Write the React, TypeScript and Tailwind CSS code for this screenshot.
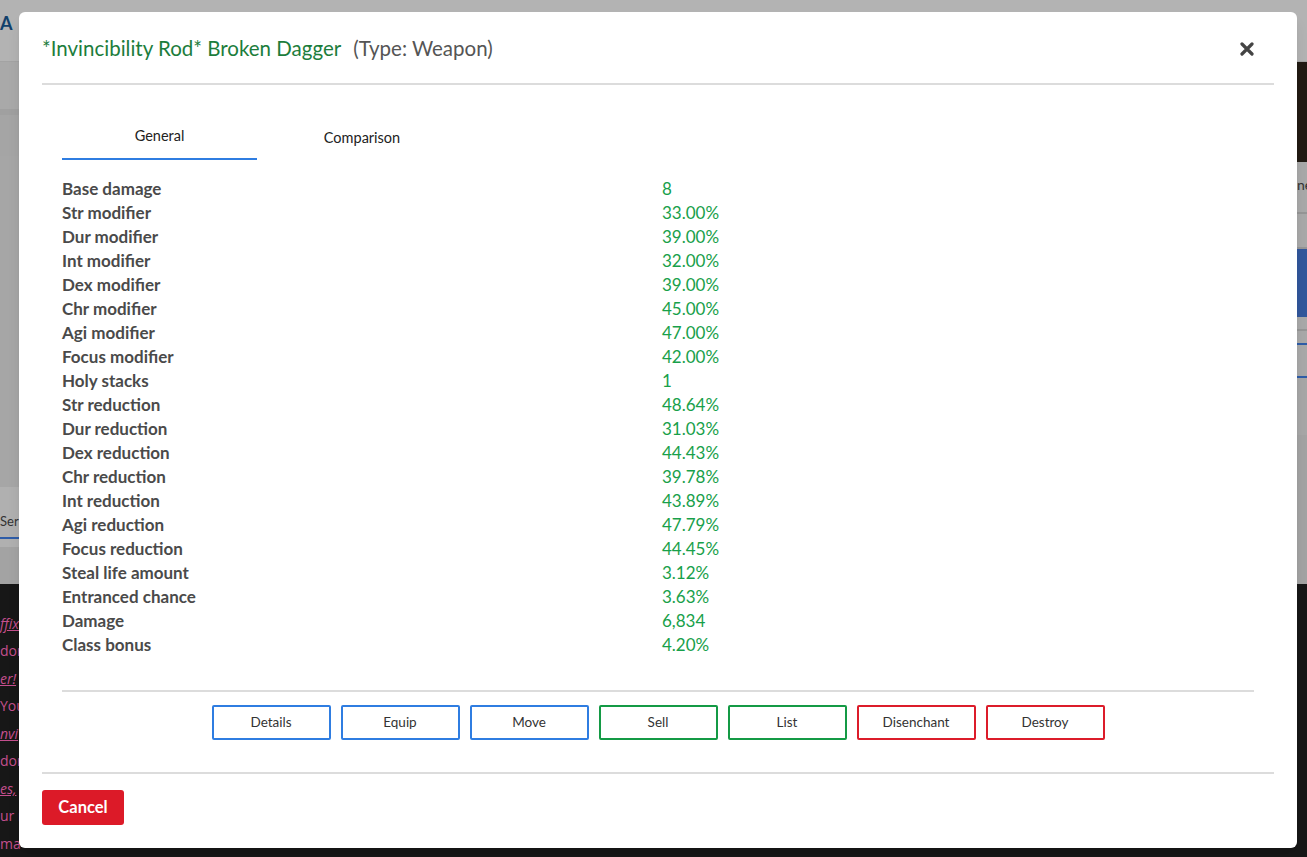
import React, { useState } from 'react';

const stats: [string, string][] = [
  ['Base damage', '8'],
  ['Str modifier', '33.00%'],
  ['Dur modifier', '39.00%'],
  ['Int modifier', '32.00%'],
  ['Dex modifier', '39.00%'],
  ['Chr modifier', '45.00%'],
  ['Agi modifier', '47.00%'],
  ['Focus modifier', '42.00%'],
  ['Holy stacks', '1'],
  ['Str reduction', '48.64%'],
  ['Dur reduction', '31.03%'],
  ['Dex reduction', '44.43%'],
  ['Chr reduction', '39.78%'],
  ['Int reduction', '43.89%'],
  ['Agi reduction', '47.79%'],
  ['Focus reduction', '44.45%'],
  ['Steal life amount', '3.12%'],
  ['Entranced chance', '3.63%'],
  ['Damage', '6,834'],
  ['Class bonus', '4.20%'],
];

const actions = [
  { label: 'Details', border: 'border-[#2f7de1]' },
  { label: 'Equip', border: 'border-[#2f7de1]' },
  { label: 'Move', border: 'border-[#2f7de1]' },
  { label: 'Sell', border: 'border-[#149a45]' },
  { label: 'List', border: 'border-[#149a45]' },
  { label: 'Disenchant', border: 'border-[#dc1c2a]' },
  { label: 'Destroy', border: 'border-[#dc1c2a]' },
];

const chatLines = [
  { text: 'ffix', link: true },
  { text: 'dor', link: false },
  { text: 'er!', link: true },
  { text: 'You', link: false },
  { text: 'nvi', link: true },
  { text: 'dor', link: false },
  { text: 'es,', link: true },
  { text: 'ur m', link: false },
  { text: 'ma', link: false },
];

const Backdrop: React.FC = () => (
  <div className="flex h-[857px] w-full flex-col bg-[#a9a9a9]">
    <div className="flex h-[63px] items-start border-b border-[#a3a3a3] bg-[#b3b3b3]">
      <div className="flex flex-1 pt-[10px] text-[18px] font-bold text-[#11406b]">A</div>
    </div>
    <div className="flex h-[527px]">
      <div className="flex w-[19px] flex-col">
        <div className="h-[47px] bg-[#a9a9a9]" />
        <div className="h-[47px] border-t-[6px] border-[#a0a0a0] bg-[#a5a5a5]" />
        <div className="h-[331px] bg-[#a6a6a6]" />
        <div className="flex h-[60px] flex-col bg-[#b0b0b0]">
          <div className="mt-[25px] text-[13px] text-[#333]">Ser</div>
          <div className="mt-[5px] h-[2px] w-full bg-[#2f5da8]" />
        </div>
        <div className="flex-1 bg-[#a3a3a3]" />
      </div>
      <div className="flex-1" />
      <div className="flex w-[10px] flex-col">
        <div className="h-[100px] bg-[#221b14]" />
        <div className="h-[30px] bg-[#a9a9a9] pt-[16px] text-[14px] leading-none text-[#333]">ne</div>
        <div className="h-[22px] border-b-2 border-[#969696] bg-[#a9a9a9]" />
        <div className="h-[35px] border-b-2 border-[#969696] bg-[#a9a9a9]" />
        <div className="h-[68px] bg-[#32579c]" />
        <div className="h-[14px] border-b-2 border-[#969696] bg-[#a9a9a9]" />
        <div className="h-[14px] border-b-2 border-[#2f5da8] bg-[#a9a9a9]" />
        <div className="h-[33px] border-b-2 border-[#2f5da8] bg-[#a9a9a9]" />
        <div className="h-[57px] bg-[#a7a7a7]" />
        <div className="flex-1 bg-[#a3a3a3]" />
      </div>
    </div>
    <div className="flex flex-1 flex-col bg-[#171717] pt-[26px] text-[14px] leading-[27.5px] text-[#c44f8e]" style={{ fontFamily: '"Open Sans", sans-serif' }}>
      {chatLines.map((l, i) => (
        <div key={i} className={`whitespace-nowrap ${l.link ? 'italic underline' : ''}`}>{l.text}</div>
      ))}
    </div>
  </div>
);

const App: React.FC = () => {
  const [tab, setTab] = useState<'general' | 'comparison'>('general');

  return (
    <div className="relative h-[857px] w-[1307px] overflow-hidden" style={{ fontFamily: 'Lato, "Open Sans", sans-serif' }}>
      <Backdrop />
      <div className="absolute left-[19px] top-[12px] flex h-[836px] w-[1278px] flex-col rounded-[6px] bg-white px-[23px] shadow-lg">
        <div className="flex h-[73px] items-center justify-between border-b-2 border-[#dcdcdc] pt-[2px]">
          <div className="flex items-baseline text-[20.5px]">
            <span className="text-[#1c7d3c]">*Invincibility Rod* Broken Dagger</span>
            <span className="ml-[12px] text-[#555]">(Type: Weapon)</span>
          </div>
          <button className="mr-[20px] text-[#444]">
            <svg width="14" height="14" viewBox="0 0 14 14">
              <path d="M2 2 L12 12 M12 2 L2 12" stroke="currentColor" strokeWidth="3.2" strokeLinecap="round" />
            </svg>
          </button>
        </div>

        <div className="flex flex-col px-[20px]">
          <div className="mt-[25px] flex">
            <button
              onClick={() => setTab('general')}
              className={`h-[50px] w-[195px] pt-[4px] text-[14.5px] text-[#222] ${tab === 'general' ? 'border-b-2 border-[#2f7de1]' : ''}`}
            >
              General
            </button>
            <button
              onClick={() => setTab('comparison')}
              className={`h-[50px] w-[210px] pt-[5px] text-[14.5px] text-[#222] ${tab === 'comparison' ? 'border-b-2 border-[#2f7de1]' : ''}`}
            >
              Comparison
            </button>
          </div>

          <div className="mt-[17px] flex flex-col">
            {stats.map(([k, v]) => (
              <div key={k} className="flex h-[24px] items-center text-[17px]">
                <div className="w-[600px] font-bold text-[#4a4a4a]">{k}</div>
                <div className="text-[#18a04a]">{v}</div>
              </div>
            ))}
          </div>

          <div className="mt-[33px] h-[2px] bg-[#dcdcdc]" />

          <div className="mt-[13px] flex justify-center gap-[10px]">
            {actions.map((a) => (
              <button key={a.label} className={`h-[35px] w-[119px] rounded-[2px] border-2 text-[13.5px] text-[#333] ${a.border}`}>
                {a.label}
              </button>
            ))}
          </div>
        </div>

        <div className="mt-[32px] h-[2px] bg-[#dcdcdc]" />
        <div className="mt-[16px]">
          <button className="h-[35px] w-[82px] rounded-[3px] bg-[#dc1a28] text-[16.5px] font-bold text-white">Cancel</button>
        </div>
      </div>
    </div>
  );
};

export default App;
